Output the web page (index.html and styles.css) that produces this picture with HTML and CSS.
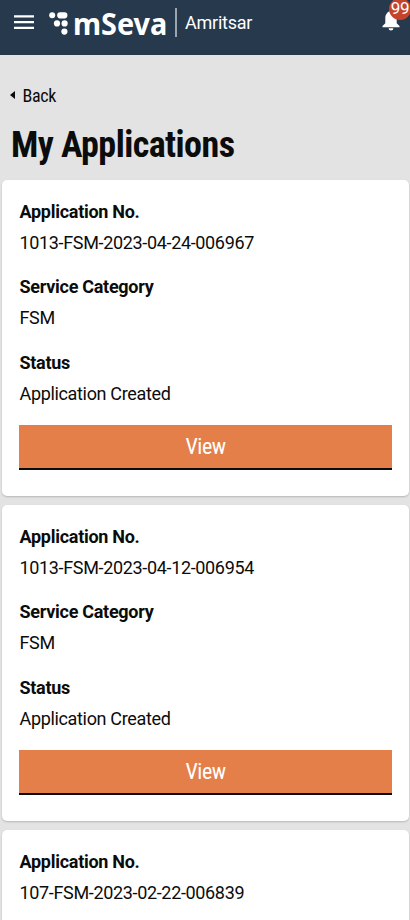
FILE: index.html
```html
<!DOCTYPE html>
<html lang="en">
<head>
<meta charset="utf-8">
<meta name="viewport" content="width=device-width, initial-scale=1">
<title>My Applications</title>
<link rel="stylesheet" href="styles.css">
</head>
<body>
<header class="topbar">
  <svg class="menu" width="20" height="15" viewBox="0 0 20 15"><path d="M0 1.300h20M0 7.200h20M0 12.900h20" stroke="#fff" stroke-width="2.300"/></svg>
  <svg class="mark" width="20" height="24" viewBox="0 0 20 24" fill="#fff"><circle cx="3.200" cy="3.200" r="3"/><rect x="8.200" y=".2" width="10.200" height="6.200" rx="2.800"/><circle cx="8" cy="11.400" r="3.100"/><circle cx="15.600" cy="11.400" r="3.100"/><circle cx="15.400" cy="19.600" r="3.100"/></svg>
  <span class="brand"><span class="brand-text">mSeva</span></span>
  <span class="divider"></span>
  <span class="city">Amritsar</span>
  <span class="bell">
    <svg width="18" height="22" viewBox="0 0 18 22" fill="#fff"><path d="M9 1C5.300 1.500 3.300 4.500 3.300 8v5.200L.5 16v1.200h17V16l-2.800-2.800V8C14.700 4.500 12.700 1.500 9 1zM6.600 18.200h4.800a2.400 2.200 0 0 1-4.800 0z"/></svg>
    <span class="badge">99</span>
  </span>
</header>
<main>
  <a class="back"><svg width="5" height="8" viewBox="0 0 5 8"><path d="M5 0v8L0 4z" fill="#0b0c0c"/></svg><span class="condensed">Back</span></a>
  <h1 class="condensed">My Applications</h1>
  <section class="card">
    <dl><dt>Application No.</dt><dd>1013-FSM-2023-04-24-006967</dd><dt>Service Category</dt><dd>FSM</dd><dt>Status</dt><dd>Application Created</dd></dl>
    <button class="condensed">View</button>
  </section>
  <section class="card">
    <dl><dt>Application No.</dt><dd>1013-FSM-2023-04-12-006954</dd><dt>Service Category</dt><dd>FSM</dd><dt>Status</dt><dd>Application Created</dd></dl>
    <button class="condensed">View</button>
  </section>
  <section class="card card-last">
    <dl><dt>Application No.</dt><dd>107-FSM-2023-02-22-006839</dd></dl>
  </section>
</main>
</body>
</html>
```
FILE: styles.css
```css
* { box-sizing: border-box; }
html, body { margin: 0; height: 920px; overflow: hidden; }
body { background: #e3e3e3; color: #0b0c0c; font-family: Roboto, sans-serif; font-size: 18px; letter-spacing: -.34px; }
.topbar { display: flex; align-items: flex-start; height: 55px; background: #27394d; color: #fff; padding-left: 14px; }
.menu { margin-top: 15px; }
.mark { margin: 12px 0 0 15px; }
.brand { width: 95px; margin: 8px 0 0 4px; font: 700 30px/32px "Noto Sans", sans-serif; letter-spacing: 0; }
.brand-text { display: inline-block; transform: scaleX(.96); transform-origin: left; }
.divider { width: 2px; height: 29px; margin: 8px 0 0 7px; background: #9ca5af; }
.city { margin: 12px 0 0 8px; line-height: 22px; letter-spacing: -.25px; }
.bell { position: relative; margin: 10px 10px 0 auto; height: 22px; width: 18px; }
.bell svg { display: block; }
.badge { position: absolute; left: 7px; top: -12px; width: 22px; height: 22px; border-radius: 50%; background: #c5432b; text-align: center; line-height: 21px; font-size: 17px; letter-spacing: -.3px; }
main { display: flex; flex-direction: column; padding: 28px 1px 0 2px; }
.condensed { font-family: "Roboto Condensed", Roboto, sans-serif; font-stretch: 75%; }
.back { display: flex; align-items: center; gap: 8px; height: 24px; padding-left: 7.500px; letter-spacing: -.3px; }
h1 { margin: 16px 0 13px 9px; height: 44px; line-height: 44px; font-size: 36px; font-weight: 700; letter-spacing: -.55px; }
.card { flex: none; height: 316px; margin-bottom: 9px; padding: 17px 17px 0; border-radius: 5px; background: #fff; box-shadow: 0 1px 2px rgba(0,0,0,.2); }
.card-last { height: 90px; margin-bottom: 0; border-radius: 5px 5px 0 0; }
dl { margin: 0 0 0 .5px; height: 228px; }
.card-last dl { height: auto; }
dt { font-weight: 700; line-height: 30px; letter-spacing: -.28px; }
dd { margin: 0 0 13px; line-height: 32.400px; letter-spacing: -.34px; }
.card-last dd { margin-bottom: 0; }
button { display: block; width: 100%; height: 45px; padding: 1px 0 0; border: 0; border-bottom: 2px solid #0b0c0c; background: #e47f49; color: #fff; font-size: 22px; line-height: 42px; font-weight: 400; letter-spacing: -.5px; }
```
